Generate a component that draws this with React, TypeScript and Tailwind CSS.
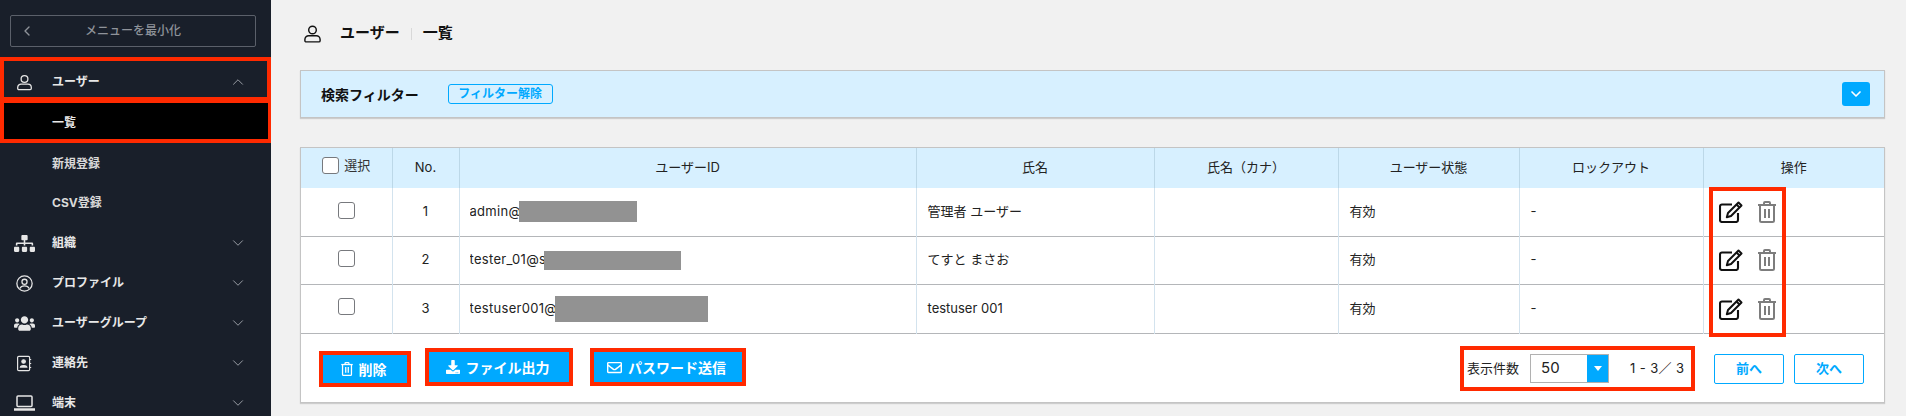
import React from "react";
import { FaSitemap, FaUsers, FaDownload, FaRegEnvelope } from "react-icons/fa";
import { ChevronLeft, ChevronDown, ChevronUp } from "lucide-react";

const font = { fontFamily: '"Inter", "Noto Sans CJK JP", "Noto Sans", sans-serif' };

const UserIcon = ({ className = "" }: { className?: string }) => (
  <svg viewBox="0 0 20 20" className={className} fill="none" stroke="currentColor" strokeWidth="1.5">
    <circle cx="10" cy="5.8" r="4" />
    <path d="M6 11.800h8a4 4 0 0 1 4 4v1.200a1.300 1.300 0 0 1-1.300 1.300H3.300A1.300 1.300 0 0 1 2 17v-1.200a4 4 0 0 1 4-4z" />
  </svg>
);

const ProfileIcon = () => (
  <svg viewBox="0 0 20 20" className="w-[17px] h-[17px]" fill="none" stroke="currentColor" strokeWidth="1.5">
    <circle cx="10" cy="10" r="9" />
    <circle cx="10" cy="8" r="3" />
    <path d="M4.500 16c1-2.400 3-3.200 5.500-3.200s4.500.8 5.500 3.200" />
  </svg>
);

const ContactIcon = () => (
  <svg viewBox="0 0 20 20" className="w-[16px] h-[17px]" fill="none" stroke="currentColor" strokeWidth="1.5">
    <rect x="2" y="1" width="15" height="18" rx="1.500" />
    <circle cx="9.500" cy="7.500" r="2.200" fill="currentColor" />
    <path d="M5.500 14.500c.4-2.500 7.600-2.500 8 0z" fill="currentColor" />
    <path d="M17 5h2M17 10h2M17 15h2" />
  </svg>
);

const LaptopIcon = () => (
  <svg viewBox="0 0 21 16" className="w-[21px] h-[16px]" fill="none" stroke="currentColor" strokeWidth="1.5">
    <rect x="3" y="1" width="15" height="10.500" rx="1" />
    <path d="M0 14.500h21" strokeWidth="2.500" />
  </svg>
);

const EditIcon = () => (
  <svg viewBox="0 0 24 22" className="w-[24px] h-[22px] text-[#111]" fill="none" stroke="currentColor">
    <path d="M13 3.500H3a2 2 0 0 0-2 2V19a2 2 0 0 0 2 2h14a2 2 0 0 0 2-2v-7" strokeWidth="2.100" />
    <path d="M19.500 1.500l3 3-10.500 10.500-4.200 1.200 1.200-4.200z" strokeWidth="2" strokeLinejoin="round" />
    <path d="M17.500 3.500l3 3" strokeWidth="2" />
  </svg>
);

const TrashIcon = ({ className = "" }: { className?: string }) => (
  <svg viewBox="0 0 18 22" className={className} fill="none" stroke="currentColor" strokeWidth="2">
    <path d="M0 4h18" />
    <path d="M6 4V2a1 1 0 0 1 1-1h4a1 1 0 0 1 1 1v2" />
    <path d="M2 4v15.500A1.500 1.500 0 0 0 3.500 21h11a1.500 1.500 0 0 0 1.500-1.500V4" />
    <path d="M7 8v9M11 8v9" />
  </svg>
);

const NavRow = ({ icon, label }: { icon: React.ReactNode; label: string }) => (
  <div className="flex items-center text-[#e8e8e8] text-[12px] font-bold h-10">
    <div className="w-[48px] mr-[4px] flex justify-center shrink-0 text-[#e6e6e6]">{icon}</div>
    <div className="flex-1">{label}</div>
    <div className="w-[42px] text-[#9a9ea6]">
      <ChevronDown size={18} strokeWidth={1.300} />
    </div>
  </div>
);

const Sidebar = () => (
  <aside className="w-[271px] shrink-0 bg-[#191f2a] h-[416px] overflow-hidden pt-[15px]">
    <div className="mx-[10px] w-[246px] h-[32px] border border-[#5b606a] rounded-[2px] flex items-center text-[#8f939a] text-[12px] font-medium relative">
      <ChevronLeft size={16} className="ml-[8px]" />
      <div className="absolute inset-0 flex items-center justify-center">メニューを最小化</div>
    </div>
    <div className="mt-[10px] border-[4px] border-[#ff2a00] h-[44px] pt-[6px] flex items-center text-[#e8e8e8] text-[12px] font-bold">
      <div className="w-[40px] flex justify-center text-[#e6e6e6]"><UserIcon className="w-[17px] h-[17px]" /></div>
      <div className="flex-1 ml-[8px]">ユーザー</div>
      <div className="w-[38px] text-[#9a9ea6]"><ChevronUp size={18} strokeWidth={1.300} /></div>
    </div>
    <div className="border-[4px] border-[#ff2a00] bg-black h-[44px] -mt-[2px] w-[272px] pt-[3px] flex items-center pl-[48px] text-[#e8e8e8] text-[12px] font-bold">一覧</div>
    <div className="h-10 pl-[52px] pt-[2px] flex items-center text-[#d8d8d8] text-[12px] font-bold">新規登録</div>
    <div className="h-10 pl-[52px] flex items-center text-[#d8d8d8] text-[12px] font-bold">CSV登録</div>
    <NavRow icon={<FaSitemap size={21} />} label="組織" />
    <NavRow icon={<ProfileIcon />} label="プロファイル" />
    <NavRow icon={<FaUsers size={21} />} label="ユーザーグループ" />
    <NavRow icon={<ContactIcon />} label="連絡先" />
    <NavRow icon={<LaptopIcon />} label="端末" />
  </aside>
);

const rows = [
  { n: 1, id: "admin@", tw: "w-[49px]", mw: "w-[118px]", name: "管理者 ユーザー", h: "h-[48px]", mask: "h-[21px]" },
  { n: 2, id: "tester_01@s", tw: "w-[74px]", mw: "w-[137px]", name: "てすと まさお", h: "h-[48px]", mask: "h-[19px]" },
  { n: 3, id: "testuser001@", tw: "w-[85px]", mw: "w-[153px]", name: "testuser 001", h: "h-[49px]", mask: "h-[26px]" },
];

const colW = ["w-[91px]", "w-[67px]", "w-[457px]", "w-[238px]", "w-[184px]", "w-[181px]", "w-[184px]", "w-[181px]"];
const heads = ["", "No.", "ユーザーID", "氏名", "氏名（カナ）", "ユーザー状態", "ロックアウト", "操作"];

const Check = () => <span className="inline-block w-[17px] h-[17px] rounded-[3px] border border-[#77797d] bg-white" />;

const ActionBtn = ({ icon, label, cls }: { icon: React.ReactNode; label: string; cls: string }) => (
  <div className={`border-[4px] border-[#ff2a00] bg-[#00a9ff] text-white text-[14px] font-bold flex items-center justify-center gap-[6px] pr-[3px] ${cls}`}>
    {icon}
    <span>{label}</span>
  </div>
);

const Table = () => (
  <div className="mt-[29px] w-[1585px] h-[256px] bg-white border border-[#c4c4c4] shadow-[0_1px_1px_rgba(0,0,0,0.15)] relative">
    <table className="table-fixed w-full border-collapse text-[13px] text-[#222]">
      <thead>
        <tr className="h-[40px] bg-[#d7f0ff]">
          {heads.map((h, i) => (
            <th key={i} className={`${colW[i]} font-normal text-center border-r last:border-r-0 border-[#bcd8e8] p-0`}>
              {i === 0 ? (
                <span className="inline-flex items-center gap-[5px] text-[#333]"><Check />選択</span>
              ) : h}
            </th>
          ))}
        </tr>
      </thead>
      <tbody>
        {rows.map((r) => (
          <tr key={r.n} className={`${r.h} border-b border-[#b4b6b9]`}>
            <td className="text-center border-r border-[#d3e3ee] p-0 align-middle"><span className="inline-flex translate-y-[1px]"><Check /></span></td>
            <td className="text-center border-r border-[#d3e3ee] p-0">{r.n}</td>
            <td className="border-r border-[#d3e3ee] pl-[10px] p-0">
              <span className="flex items-center">
                <span className={`${r.tw} overflow-hidden whitespace-nowrap tracking-[0.3px]`}>{r.id}</span>
                <span className={`bg-[#929292] ${r.mask} ${r.mw}`} />
              </span>
            </td>
            <td className="border-r border-[#d3e3ee] pl-[11px] p-0">{r.name}</td>
            <td className="border-r border-[#d3e3ee] p-0" />
            <td className="border-r border-[#d3e3ee] pl-[11px] p-0">有効</td>
            <td className="border-r border-[#d3e3ee] pl-[11px] p-0">-</td>
            <td className="p-0 pl-[15px]">
              <span className="flex items-center gap-[15px]">
                <EditIcon />
                <TrashIcon className="w-[18px] h-[22px] text-[#7d7d7d]" />
              </span>
            </td>
          </tr>
        ))}
      </tbody>
    </table>

    <div className="h-[70px] flex items-center pl-[18px] pr-[20px]">
      <ActionBtn icon={<TrashIcon className="w-[12px] h-[14px]" />} label="削除" cls="w-[92px] h-[36px] mt-[1px]" />
      <ActionBtn icon={<FaDownload size={14} />} label="ファイル出力" cls="w-[148px] h-[38px] ml-[14px] -mt-[3px]" />
      <ActionBtn icon={<FaRegEnvelope size={15} />} label="パスワード送信" cls="w-[156px] h-[38px] ml-[17px] -mt-[3px]" />
      <div className="ml-auto border-[4px] border-[#ff2a00] w-[235px] h-[45px] flex items-center pl-[3px] text-[13px] text-[#222]">
        <span>表示件数</span>
        <div className="ml-[11px] w-[79px] h-[29px] border border-[#b1b1b1] flex items-center shrink-0">
          <span className="flex-1 pl-[10px] text-[15px]">50</span>
          <span className="w-[21px] h-full bg-[#00a9ff] flex items-center justify-center">
            <span className="w-0 h-0 border-l-[4px] border-r-[4px] border-t-[5px] border-l-transparent border-r-transparent border-t-white" />
          </span>
        </div>
        <span className="ml-[21px] whitespace-nowrap tracking-[0.4px]">1 - 3／ 3</span>
      </div>
      <div className="ml-[19px] w-[70px] h-[30px] border border-[#00a9ff] rounded-[2px] text-[#00a9ff] text-[13px] font-bold flex items-center justify-center">前へ</div>
      <div className="ml-[10px] w-[70px] h-[30px] border border-[#00a9ff] rounded-[2px] text-[#00a9ff] text-[13px] font-bold flex items-center justify-center">次へ</div>
    </div>

    <div className="absolute left-[1408px] top-[39px] w-[77px] h-[150px] border-[4px] border-[#ff2a00]" />
  </div>
);

export default function App() {
  return (
    <div className="flex h-[416px] w-[1906px] overflow-hidden bg-[#f1f1f1]" style={font}>
      <Sidebar />
      <main className="flex-1 pl-[29px]">
        <div className="h-[70px] flex items-center text-[15px] font-bold text-[#111] pb-[3px]">
          <UserIcon className="w-[19px] h-[20px] ml-[3px]" />
          <span className="ml-[18px]">ユーザー</span>
          <span className="mx-[11px] w-px h-[12px] bg-[#d8d8d8]" />
          <span>一覧</span>
        </div>
        <div className="w-[1585px] h-[48px] bg-[#d7f0ff] border border-[#c4c4c4] shadow-[0_1px_1px_rgba(0,0,0,0.15)] flex items-center pl-[20px] pr-[14px]">
          <span className="text-[14px] font-bold text-[#111]">検索フィルター</span>
          <span className="ml-[29px] w-[105px] h-[20px] border border-[#00a9ff] rounded-[3px] text-[#00a9ff] text-[12px] font-bold flex items-center justify-center">フィルター解除</span>
          <span className="ml-auto w-[28px] h-[24px] rounded-[3px] bg-[#00a9ff] text-white flex items-center justify-center">
            <ChevronDown size={16} strokeWidth={2.500} />
          </span>
        </div>
        <Table />
      </main>
    </div>
  );
}
